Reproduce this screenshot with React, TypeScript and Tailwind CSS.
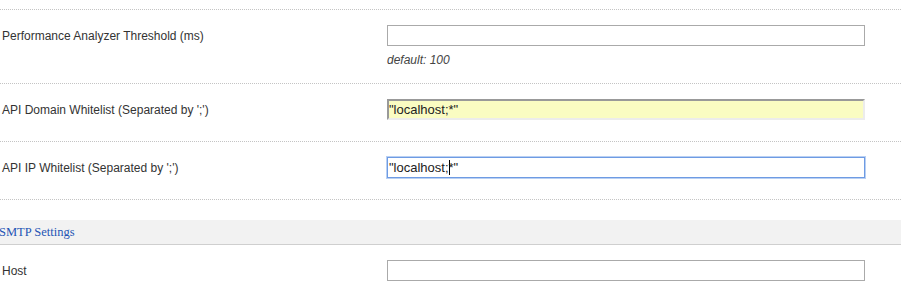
const rowCls = "grid grid-cols-[387px_478px] border-t border-dotted border-[#c4c4c4] pt-[15px]";

function Label({ text }: { text: string }) {
  return (
    <div className="flex h-[21px] items-center pl-[2px] text-[12px] text-[#333]">{text}</div>
  );
}

function TextBox({ value = "" }: { value?: string }) {
  return (
    <input
      readOnly
      value={value}
      className="block h-[21px] w-[478px] border border-[#aaaaaa] bg-white px-px text-[13px] text-[#222] outline-none"
    />
  );
}

export default function App() {
  return (
    <div className="w-[901px] bg-white pt-[9px] font-['Liberation_Sans',Arial,sans-serif]">
      <div className={`${rowCls} pb-4`}>
        <Label text="Performance Analyzer Threshold (ms)" />
        <div>
          <TextBox />
          <div className="mt-[7px] h-[14px] text-[12px] leading-[14px] italic text-[#444]">default: 100</div>
        </div>
      </div>

      <div className={`${rowCls} pb-[21px]`}>
        <Label text="API Domain Whitelist (Separated by ';')" />
        <div className="flex h-[21px] w-[478px] items-center border-2 border-t-[#999] border-l-[#999] border-r-[#ececec] border-b-[#ececec] bg-[#fafcc2] text-[13px] text-[#222]">
          "localhost;*"
        </div>
      </div>

      <div className={`${rowCls} border-b pb-[21px]`}>
        <Label text="API IP Whitelist (Separated by ';')" />
        <div className="flex h-[21px] w-[478px] items-center border border-[#6e9be3] bg-white px-px text-[13px] text-[#222] shadow-[0_0_0_1px_#b9d0f3]">
          <span>"localhost;</span>
          <span className="-mr-px inline-block h-[15px] w-px bg-black" />
          <span>*"</span>
        </div>
      </div>

      <div className="mt-5 flex h-[25px] items-center border-b border-[#cfcfcf] bg-[#f2f2f2] font-['Liberation_Serif',serif] text-[12.5px] text-[#1f55b5]">
        <span className="-ml-px">SMTP Settings</span>
      </div>

      <div className="grid grid-cols-[387px_478px] pt-[15px] pb-[21px]">
        <Label text="Host" />
        <TextBox />
      </div>
    </div>
  );
}
